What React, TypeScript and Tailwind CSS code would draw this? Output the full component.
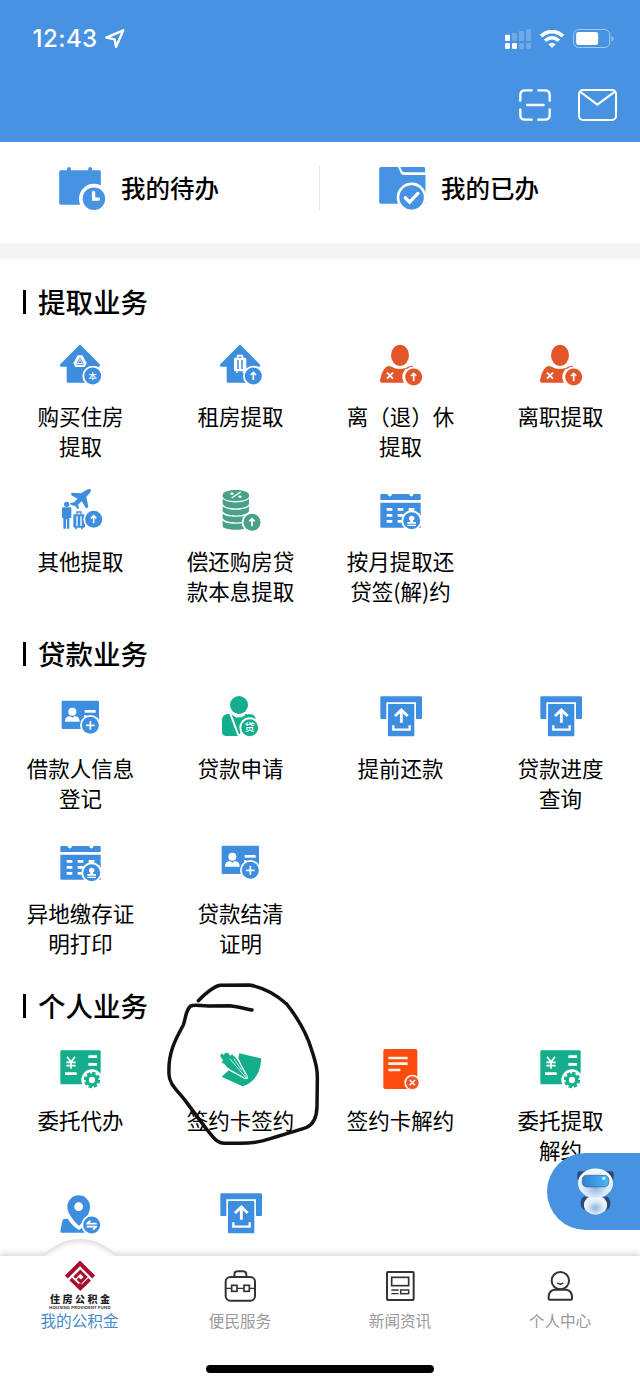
import type { ReactNode } from 'react';

const BLUE = '#3e8ee0';
const ORANGE = '#e2562a';
const GREEN = '#14ae8c';
const SAGE = '#48a188';

function Glyph({ children }: { children: ReactNode }) {
  return (
    <svg viewBox="0 0 126 126" className="h-[42px] w-[42px] shrink-0 overflow-visible" fill="none">
      {children}
    </svg>
  );
}

interface BadgeProps {
  cx: number;
  cy: number;
  color: string;
  children?: ReactNode;
}

// Round marker in the lower right corner of an icon, drawn around 0,0
function Badge({ cx, cy, color, children }: BadgeProps) {
  return (
    <g transform={`translate(${cx} ${cy})`}>
      <circle r="31" fill="#fff" />
      <circle r="25.5" fill={color} />
      {children}
    </g>
  );
}

function UpArrow() {
  return <path d="M0 12V-10M-8 -3L0 -11L8 -3" stroke="#fff" strokeWidth="5" />;
}

function HousePath() {
  return (
    <path
      d="M59 5Q63 1 67 5L122 61Q126 67 120 68H104V116H26Q23 116 23 113V68H6Q0 67 4 61Z"
      fill={BLUE}
    />
  );
}

function HouseBuyIcon() {
  return (
    <Glyph>
      <HousePath />
      <path d="M56 34H70L83 58L77 69H49L43 58Z" fill="#fff" />
      <path d="M63 42L53 59M63 42L74 62M52 62H73" stroke={BLUE} strokeWidth="2.5" />
      <path d="M63 48L68 57H58Z" fill={BLUE} />
      <Badge cx={101} cy={96} color={BLUE}>
        <text y="9" fontSize="25" fontWeight="500" fill="#fff" textAnchor="middle">本</text>
      </Badge>
    </Glyph>
  );
}

function HouseRentIcon() {
  return (
    <Glyph>
      <HousePath />
      <path d="M56 42V35H70V42" stroke="#fff" strokeWidth="5" />
      <rect x="45" y="41" width="37" height="41" rx="4" fill="#fff" />
      <path d="M57 48V75M69 48V75" stroke={BLUE} strokeWidth="4.5" />
      <path d="M54 82V87M73 82V87" stroke="#fff" strokeWidth="4" />
      <Badge cx={103} cy={96} color={BLUE}>
        <UpArrow />
      </Badge>
    </Glyph>
  );
}

function LeaveIcon() {
  return (
    <Glyph>
      <ellipse cx="63" cy="34" rx="27" ry="32" fill={ORANGE} />
      <path
        d="M28 66C38 66 42 74 63 75C82 75 88 66 98 66C108 67 113 80 118 92V116H7Q2 115 3 109C7 92 14 69 28 66Z"
        fill={ORANGE}
      />
      <path d="M24 86L42 104M42 86L24 104" stroke="#fff" strokeWidth="5.5" />
      <circle cx="104" cy="99" r="34" fill="#fff" />
      <path d="M82 74Q91 66 101 67" stroke={ORANGE} strokeWidth="4" />
      <Badge cx={104} cy={99} color={ORANGE}>
        <UpArrow />
      </Badge>
    </Glyph>
  );
}

function TravelIcon() {
  return (
    <Glyph>
      <path
        d="M95 1Q98 6 92 13L82 23L88 53L82 59L68 37L57 47L60 57L56 61L49 51L37 48L33 43L45 40L56 29L37 19V11L66 13L82 3Q90 -1 95 1Z"
        fill={BLUE}
      />
      <circle cx="23" cy="46" r="8" fill={BLUE} />
      <path d="M9 58Q9 55 12 55H34Q37 55 37 58V87H31V119H24V91H21V119H13V87H9Z" fill={BLUE} />
      <path d="M54 76V69H66V76" stroke={BLUE} strokeWidth="4" />
      <rect x="43" y="76" width="35" height="40" rx="4" fill={BLUE} />
      <path d="M54 82V111M66 82V111" stroke="#fff" strokeWidth="4" />
      <path d="M51 114V121M69 114V121" stroke={BLUE} strokeWidth="5" />
      <Badge cx={104} cy={91} color={BLUE}>
        <UpArrow />
      </Badge>
    </Glyph>
  );
}

function CoinsIcon() {
  return (
    <Glyph>
      <path d="M11 18C11 -2 90 -2 90 18V111C90 126 11 126 11 111Z" fill={SAGE} />
      <path
        d="M9 24C18 43 82 43 92 24M9 46C18 65 82 65 92 46M9 68C18 86 82 86 92 68M9 89C18 107 82 107 92 89"
        stroke="#fff"
        strokeWidth="4"
      />
      <path d="M38 27L65 9" stroke="#fff" strokeWidth="4.5" />
      <ellipse cx="39" cy="14" rx="5" ry="3.5" fill="#fff" />
      <ellipse cx="63" cy="23" rx="5" ry="3.5" fill="#fff" />
      <Badge cx={99} cy={100} color={SAGE}>
        <UpArrow />
      </Badge>
    </Glyph>
  );
}

function CalendarStampIcon() {
  return (
    <Glyph>
      <path d="M7 15H25Q28 24 36 22Q38 20 38 15H90Q92 24 100 22Q103 20 103 15H122Q125 15 125 18V33H4V18Q4 15 7 15Z" fill={BLUE} />
      <path d="M4 41H125V116H7Q4 116 4 113Z" fill={BLUE} />
      <path
        d="M23 61H40M56 61H73M89 61H106M23 79H40M56 79H73M23 97H40M56 97H73"
        stroke="#fff"
        strokeWidth="8"
      />
      <Badge cx={98} cy={95} color={BLUE}>
        <circle cy="-7" r="8" fill="#fff" />
        <path d="M-4 -3H4V4H13V9H-13V4H-4ZM-13 12H13V16H-13Z" fill="#fff" />
      </Badge>
    </Glyph>
  );
}

function UploadIcon() {
  return (
    <Glyph>
      <path d="M7 1H126Q129 1 129 4V66Q129 69 126 69H111V19H22V69H7Q4 69 4 66V4Q4 1 7 1Z" fill={BLUE} />
      <rect x="27" y="24" width="79" height="97" rx="3" fill={BLUE} />
      <path d="M67 80V45M48 60L67 42L86 60" stroke="#fff" strokeWidth="8.5" />
      <path d="M43 88V101H92V88" stroke="#fff" strokeWidth="7" />
    </Glyph>
  );
}

function IdCardIcon() {
  return (
    <Glyph>
      <rect x="8" y="14" width="112" height="85" rx="4" fill={BLUE} />
      <circle cx="40" cy="47" r="12" fill="#fff" />
      <path d="M18 77C18 62 29 60 34 61L40 65L46 61C52 60 62 62 62 77Z" fill="#fff" />
      <path d="M77 46H110" stroke="#fff" strokeWidth="8" />
      <path d="M75 60H82" stroke="#fff" strokeWidth="5" />
      <Badge cx={94} cy={88} color={BLUE}>
        <path d="M-13 0H13M0 -13V13" stroke="#fff" strokeWidth="5" />
      </Badge>
    </Glyph>
  );
}

function LoanApplyIcon() {
  return (
    <Glyph>
      <circle cx="60" cy="27" r="27" fill={GREEN} />
      <path d="M31 54L56 120H20Q9 119 9 108V71Q9 54 31 54Z" fill={GREEN} />
      <path d="M38 55L50 64H69L82 55Q76 72 69 90L63 114L60 114Z" fill={GREEN} />
      <path d="M40 52L51 64L59 59M68 62L80 54" stroke="#fff" strokeWidth="2.5" />
      <path d="M77 55H96Q107 56 110 68L80 72Z" fill={GREEN} />
      <Badge cx={92} cy={95} color={GREEN}>
        <text y="11" fontSize="31" fontWeight="500" fill="#fff" textAnchor="middle">贷</text>
      </Badge>
    </Glyph>
  );
}

function EntrustIcon() {
  return (
    <Glyph>
      <rect x="4" y="7" width="121" height="102" rx="4" fill={GREEN} />
      <path d="M24 26L36 42L48 26M36 42V62M22 43H50M22 53H50" stroke="#fff" strokeWidth="5" />
      <path d="M18 77H53M88 26H114M88 49H114" stroke="#fff" strokeWidth="8" />
      <circle cx="99" cy="96" r="32" fill="#fff" />
      <circle cx="99" cy="96" r="21" stroke={GREEN} strokeWidth="7" strokeDasharray="10 6.49" />
      <circle cx="99" cy="96" r="14.5" stroke={GREEN} strokeWidth="10" />
    </Glyph>
  );
}

function SignIcon() {
  return (
    <Glyph>
      <path d="M61 16L126 31C127 68 108 104 71 115Q38 100 8 86L30 66L84 92L58 30Z" fill={GREEN} />
      <path d="M3 23L9 16L14 22L18 15L27 14L34 24L39 19L50 29L58 40L84 92L36 66Q20 56 14 46L8 46L12 37Z" fill={GREEN} />
      <path d="M28 65L76 91L85 92L84 83L57 34" stroke="#fff" strokeWidth="3" />
      <path d="M32 32L82 90M44 32L68 66" stroke="#fff" strokeWidth="2.5" />
    </Glyph>
  );
}

function CancelDocIcon() {
  return (
    <Glyph>
      <rect x="13" y="3" width="102" height="120" rx="6" fill="#fb4d0f" />
      <path d="M28 30H86M28 47H86M28 66H64" stroke="#fff3e8" strokeWidth="8" />
      <circle cx="100" cy="104" r="24" fill="#fff3e8" />
      <circle cx="100" cy="104" r="19" fill="#ea552d" />
      <path d="M92 96L108 112M108 96L92 112" stroke="#fff3e8" strokeWidth="4.5" />
    </Glyph>
  );
}

function TransferIcon() {
  return (
    <Glyph>
      <path d="M18 77H26C34 91 46 102 60 111L72 101L86 119H7Q3 119 4 114L10 83Q12 77 18 77Z" fill={BLUE} />
      <path d="M60 99C46 84 25 63 25 41A34 34 0 0 1 93 41C93 63 75 84 60 99Z" fill={BLUE} />
      <circle cx="59" cy="41" r="13" fill="#fff" />
      <Badge cx={98} cy={96} color={BLUE}>
        <path d="M-16 -4H15M-4 -13L-14 -4M16 5H-15M4 14L14 5" stroke="#fff" strokeWidth="5.5" />
      </Badge>
    </Glyph>
  );
}

function TodoIcon() {
  return (
    <svg viewBox="0 0 141 130" className="h-[43px] w-[47px]">
      <path d="M5 10H24V4Q30 -4 35 4V10H88V4Q94 -4 99 4V10H121Q126 10 126 15V114H5Q0 114 0 109V15Q0 10 5 10Z" fill="#4792e3" />
      <circle cx="105" cy="96" r="45" fill="#fff" />
      <circle cx="105" cy="96" r="34" fill="#4792e3" />
      <path d="M104 77V97H119" stroke="#fff" strokeWidth="10" strokeLinecap="round" fill="none" />
    </svg>
  );
}

function DoneIcon() {
  return (
    <svg viewBox="0 0 141 130" className="h-[43px] w-[47px]">
      <path d="M5 0H57L65 18Q68 24 74 24H140V111H5Q0 111 0 106V5Q0 0 5 0Z" fill="#4792e3" />
      <path d="M64 0H135Q139 0 139 5V16H76Q71 16 69 12Z" fill="#4792e3" />
      <circle cx="98" cy="92" r="45" fill="#fff" />
      <circle cx="98" cy="92" r="37" fill="#4792e3" />
      <path d="M79 93L92 106L117 80" stroke="#fff" strokeWidth="10" strokeLinecap="round" fill="none" />
    </svg>
  );
}

function RobotIcon() {
  return (
    <svg viewBox="0 0 112 142" className="h-[47px] w-[37px]">
      <defs>
        <radialGradient id="shell" cx="50%" cy="65%" r="60%">
          <stop offset="0" stopColor="#8fb2dd" />
          <stop offset="0.55" stopColor="#dbe9f8" />
          <stop offset="1" stopColor="#f7fbff" />
        </radialGradient>
        <linearGradient id="visor" x1="0" y1="0" x2="1" y2="0">
          <stop offset="0" stopColor="#2c83d6" />
          <stop offset="1" stopColor="#4db6f4" />
        </linearGradient>
      </defs>
      <rect x="1" y="10" width="30" height="28" rx="7" fill="#2a4a74" />
      <rect x="81" y="10" width="30" height="28" rx="7" fill="#2a4a74" />
      <ellipse cx="24" cy="106" rx="13" ry="20" fill="#2a4a74" />
      <ellipse cx="88" cy="106" rx="13" ry="20" fill="#2a4a74" />
      <ellipse cx="56" cy="112" rx="35" ry="29" fill="url(#shell)" />
      <ellipse cx="56" cy="46" rx="53" ry="45" fill="url(#shell)" />
      <rect x="16" y="22" width="80" height="35" rx="13" fill="url(#visor)" stroke="#36608f" strokeWidth="2" />
      <circle cx="81" cy="31" r="5" fill="#d6f0ff" />
    </svg>
  );
}

interface Service {
  label: string;
  icon: () => ReactNode;
}

const sections: { title: string; items: Service[] }[] = [
  {
    title: '提取业务',
    items: [
      { label: '购买住房\n提取', icon: HouseBuyIcon },
      { label: '租房提取', icon: HouseRentIcon },
      { label: '离（退）休\n提取', icon: LeaveIcon },
      { label: '离职提取', icon: LeaveIcon },
      { label: '其他提取', icon: TravelIcon },
      { label: '偿还购房贷\n款本息提取', icon: CoinsIcon },
      { label: '按月提取还\n贷签(解)约', icon: CalendarStampIcon },
    ],
  },
  {
    title: '贷款业务',
    items: [
      { label: '借款人信息\n登记', icon: IdCardIcon },
      { label: '贷款申请', icon: LoanApplyIcon },
      { label: '提前还款', icon: UploadIcon },
      { label: '贷款进度\n查询', icon: UploadIcon },
      { label: '异地缴存证\n明打印', icon: CalendarStampIcon },
      { label: '贷款结清\n证明', icon: IdCardIcon },
    ],
  },
  {
    title: '个人业务',
    items: [
      { label: '委托代办', icon: EntrustIcon },
      { label: '签约卡签约', icon: SignIcon },
      { label: '签约卡解约', icon: CancelDocIcon },
      { label: '委托提取\n解约', icon: EntrustIcon },
      { label: '', icon: TransferIcon },
      { label: '', icon: UploadIcon },
    ],
  },
];

function StatusBar() {
  return (
    <div className="flex h-[77px] items-center pr-[26px] pl-[32.5px] text-white">
      <span className="font-[Inter] text-[24px] font-medium tracking-[0.45px]">12:43</span>
      <svg viewBox="0 0 60 60" className="ml-[7px] h-5 w-5" fill="none">
        <path d="M4 26L55 4L33 54L29 31Z" stroke="#fff" strokeWidth="7" strokeLinejoin="round" />
      </svg>
      <div className="ml-auto flex items-center gap-[9px]">
        <svg viewBox="0 0 78 60" className="h-5 w-[26px]" fill="#fff">
          <rect x="0" y="17" width="15" height="19" rx="3" />
          <rect x="0" y="42" width="15" height="18" rx="4" />
          <rect x="21" y="42" width="15" height="18" rx="4" />
          <g opacity="0.22">
            <rect x="21" y="12" width="15" height="24" rx="3" />
            <rect x="42" y="6" width="15" height="30" rx="3" />
            <rect x="63" y="0" width="15" height="36" rx="3" />
            <rect x="42" y="42" width="15" height="18" rx="4" />
            <rect x="63" y="42" width="15" height="18" rx="4" />
          </g>
        </svg>
        <svg viewBox="0 0 72 54" className="h-[18px] w-6" fill="none" stroke="#fff">
          <path d="M3 18Q36 -9 69 18" strokeWidth="11" />
          <path d="M15 32Q36 14 57 32" strokeWidth="10" />
          <path d="M25 43Q36 33 47 43L36 54Z" fill="#fff" stroke="none" />
        </svg>
        <svg viewBox="0 0 122 57" className="h-[19px] w-[41px]" fill="none">
          <rect x="1.5" y="1.5" width="108" height="54" rx="15" stroke="#fff" strokeOpacity="0.5" strokeWidth="3" />
          <rect x="9" y="9" width="66" height="39" rx="7" fill="#fff" />
          <path d="M115 20Q121 24 121 29Q121 34 115 38Z" fill="#fff" fillOpacity="0.5" />
        </svg>
      </div>
    </div>
  );
}

function Header() {
  return (
    <header className="h-[142px] shrink-0 bg-[#4792e1]">
      <StatusBar />
      <div className="flex h-14 items-center justify-end gap-[27px] pr-[23px]">
        <svg viewBox="0 0 96 96" className="h-8 w-8" fill="none" stroke="#fff" strokeWidth="7" strokeLinecap="round">
          <path d="M38 4H18Q4 4 4 18V35M58 4H78Q92 4 92 18V35M4 61V78Q4 92 18 92H38M92 61V78Q92 92 78 92H58M24 48H74" />
        </svg>
        <svg viewBox="0 0 117 96" className="h-8 w-[39px]" fill="none" stroke="#fff" strokeWidth="6">
          <rect x="3" y="3" width="111" height="90" rx="12" />
          <path d="M6 8L58 47L111 8" />
        </svg>
      </div>
    </header>
  );
}

function ServiceSection({ title, items }: { title: string; items: Service[] }) {
  return (
    <section className="pb-[27px]">
      <h2 className="flex h-10 items-center gap-3 pl-[23px] text-[27.5px] leading-10 font-medium">
        <span className="h-6 w-[3px] bg-black" />
        <span className="-mt-0.5">{title}</span>
      </h2>
      <div className="mt-[22px] grid grid-cols-4 gap-y-[27px]">
        {items.map((item, index) => {
          const Icon = item.icon;
          return (
            <div key={index} className="flex h-[118px] flex-col items-center">
              <Icon />
              <p className="mt-[15px] pl-px text-center text-[21.5px] leading-[30px] whitespace-pre-line">{item.label}</p>
            </div>
          );
        })}
      </div>
    </section>
  );
}

function FundLogo() {
  return (
    <svg viewBox="0 0 186 150" className="h-[50px] w-[62px] overflow-visible" fill="none">
      <g transform="translate(48 -3)" stroke="#a5102f">
        <path d="M4 51L45 10L86 51" strokeWidth="12" />
        <path d="M19 54L45 28L56 39" strokeWidth="0" />
        <path d="M28 53L46 35L62 51L48 65L38 56" strokeWidth="9" />
        <path d="M17 57L46 85L74 58" strokeWidth="11" />
        <path d="M46 84V70" strokeWidth="8" />
      </g>
      <text x="3" y="126" fontSize="30" fontWeight="900" fill="#222" textLength="180">住房公积金</text>
      <text x="0" y="144" fontSize="11" fontWeight="700" fill="#333" textLength="184" lengthAdjust="spacingAndGlyphs">
        HOUSING PROVIDENT FUND
      </text>
    </svg>
  );
}

function BriefcaseIcon() {
  return (
    <svg viewBox="0 0 96 96" className="h-8 w-8" fill="none" stroke="#333" strokeWidth="6">
      <rect x="5" y="21" width="88" height="71" rx="14" />
      <path d="M31 20V14Q31 4 41 4H57Q67 4 67 14V20" />
      <path d="M5 55H23M39 55H60M77 55H93" strokeWidth="4" />
      <rect x="23" y="46" width="16" height="18" strokeWidth="5" />
      <rect x="60" y="46" width="16" height="18" strokeWidth="5" />
    </svg>
  );
}

function NewsIcon() {
  return (
    <svg viewBox="0 0 96 96" className="h-8 w-8" fill="none" stroke="#333" strokeWidth="6">
      <rect x="9" y="6" width="80" height="84" rx="3" />
      <rect x="23" y="22" width="51" height="25" strokeWidth="5" />
      <path d="M22 60H44M22 71H44" strokeWidth="4" />
      <rect x="50" y="60" width="24" height="11" strokeWidth="4.5" />
    </svg>
  );
}

function ProfileIcon() {
  return (
    <svg viewBox="0 0 96 96" className="h-8 w-8" fill="none" stroke="#333" strokeWidth="6">
      <circle cx="49" cy="32" r="26" />
      <path d="M40 38Q49 47 58 38" strokeWidth="4.5" />
      <path d="M30 59H68Q83 62 84 80V86Q84 89 81 89H17Q14 89 14 86V80Q15 62 30 59Z" />
    </svg>
  );
}

const tabs = [
  { label: '便民服务', icon: BriefcaseIcon },
  { label: '新闻资讯', icon: NewsIcon },
  { label: '个人中心', icon: ProfileIcon },
];

function TabBar() {
  return (
    <nav className="relative flex h-[129px] shrink-0 flex-col bg-white shadow-[0_-3px_6px_rgba(0,0,0,0.14)]">
      {/* Raised arc behind the active tab */}
      <div className="absolute -top-[17px] left-[31px] h-[17px] w-[98px] overflow-hidden">
        <div className="h-[98px] w-[98px] rounded-full bg-white shadow-[inset_0_3px_5px_rgba(0,0,0,0.14)]" />
      </div>
      <div className="relative grid grid-cols-4 text-[15.6px] leading-5 text-[#999]">
        <div className="flex flex-col items-center pt-[5px] text-[#4788c7]">
          <FundLogo />
          <span className="-mt-px pr-px">我的公积金</span>
        </div>
        {tabs.map((tab) => {
          const Icon = tab.icon;
          return (
            <div key={tab.label} className="flex flex-col items-center gap-2 pt-[14px]">
              <Icon />
              <span>{tab.label}</span>
            </div>
          );
        })}
      </div>
      <div className="mx-auto mt-auto mb-3 h-2 w-[228px] rounded-full bg-black" />
    </nav>
  );
}

export default function App() {
  return (
    <div
      lang="zh-CN"
      className="relative flex h-[1385px] w-[640px] flex-col overflow-hidden bg-white font-['Noto_Sans_CJK_SC',sans-serif] text-black"
    >
      <Header />
      <div className="flex h-[101px] shrink-0 pb-[9px] text-[24.5px] font-medium">
        <div className="flex w-[319px] items-center gap-[15px] pl-[59px]">
          <TodoIcon />
          我的待办
        </div>
        <div className="h-[46px] w-px self-center bg-[#e8e8e8]" />
        <div className="flex flex-1 items-center gap-[15px] pl-[59px]">
          <DoneIcon />
          我的已办
        </div>
      </div>
      <div className="h-4 shrink-0 bg-[#f4f4f4]" />

      <main className="min-h-0 flex-1 overflow-hidden pt-[23px]">
        {sections.map((section) => (
          <ServiceSection key={section.title} title={section.title} items={section.items} />
        ))}
      </main>
      <TabBar />

      {/* Floating assistant */}
      <button className="absolute top-[1153px] right-0 flex h-[77px] w-[93px] items-center rounded-l-full bg-[#4792e1] pl-[30px]">
        <RobotIcon />
      </button>

      {/* Freehand pen mark */}
      <svg
        viewBox="0 0 540 570"
        className="pointer-events-none absolute top-[970px] left-[150px] h-[190px] w-[180px]"
        fill="none"
        stroke="#111"
        strokeWidth="10.5"
        strokeLinecap="round"
        strokeLinejoin="round"
      >
        <path d="M145 92C165 72 188 50 210 46L298 45C340 52 380 75 410 102C440 140 470 190 485 240C498 280 503 300 502 330L501 410C500 440 492 462 470 472C430 485 380 500 340 512C310 520 290 520 270 520H222C205 518 198 512 190 502L170 478L103 388C80 360 55 338 57 310C54 250 75 210 100 165C108 140 108 118 122 108C135 103 150 108 175 108L240 107C265 110 285 116 306 120" />
      </svg>
    </div>
  );
}
